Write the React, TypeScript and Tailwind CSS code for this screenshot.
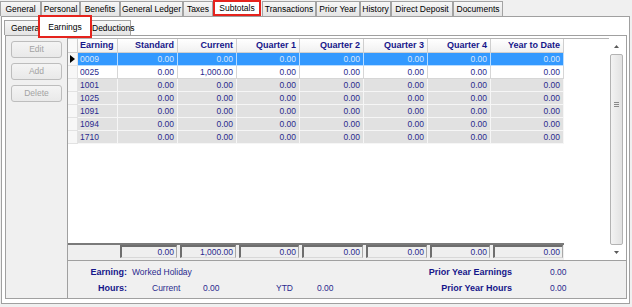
import React from "react";

const topTabs = [
  { label: "General", w: "w-[41px]" },
  { label: "Personal", w: "w-[39px]" },
  { label: "Benefits", w: "w-[40px]" },
  { label: "General Ledger", w: "w-[63px]" },
  { label: "Taxes", w: "w-[30px]" },
  { label: "Subtotals", w: "w-[48px]", active: true },
  { label: "Transactions", w: "w-[54px]" },
  { label: "Prior Year", w: "w-[44px]" },
  { label: "History", w: "w-[31px]" },
  { label: "Direct Deposit", w: "w-[62px]" },
  { label: "Documents", w: "w-[50px]" },
];

const cols = [
  { label: "Earning", w: "w-[40px]", box: "" },
  { label: "Standard", w: "w-[60px]", box: "w-[57px]" },
  { label: "Current", w: "w-[59px]", box: "w-[56px]" },
  { label: "Quarter 1", w: "w-[63px]", box: "w-[60px]" },
  { label: "Quarter 2", w: "w-[64px]", box: "w-[61px]" },
  { label: "Quarter 3", w: "w-[64px]", box: "w-[61px]" },
  { label: "Quarter 4", w: "w-[63px]", box: "w-[60px]" },
  { label: "Year to Date", w: "w-[73px]", box: "w-[70px]" },
];

const z = "0.00";
const rows = [
  ["0009", z, z, z, z, z, z, z],
  ["0025", z, "1,000.00", z, z, z, z, z],
  ["1001", z, z, z, z, z, z, z],
  ["1025", z, z, z, z, z, z, z],
  ["1091", z, z, z, z, z, z, z],
  ["1094", z, z, z, z, z, z, z],
  ["1710", z, z, z, z, z, z, z],
];

const totals = ["", z, "1,000.00", z, z, z, z, z];

// row look: 0 = selected, 1 = editable (white), rest = read only (grey)
const rowStyle = (i: number) => {
  if (i === 0) return { bg: "bg-[#3399ff]", line: "border-[#b9dcff]", text: "text-[#dce6fb]" };
  if (i === 1) return { bg: "bg-white", line: "border-[#d6d6d6]", text: "text-[#2a2a8e]" };
  return { bg: "bg-[#e1e1e1]", line: "border-[#f6f6f6]", text: "text-[#2a2a8e]" };
};

function SideButton({ label }: { label: string }) {
  return (
    <div className="w-[51px] h-[17px] flex items-center justify-center rounded-[3px] border border-[#bdbdbd] bg-linear-to-b from-[#f4f4f4] to-[#e9e9e9] text-[#a3a3a3]">
      {label}
    </div>
  );
}

export default function App() {
  return (
    <div className="w-[632px] h-[307px] overflow-hidden bg-[#f0f0f0] font-['Liberation_Sans',Arial,sans-serif] text-[8.5px] leading-none text-black">
      {/* Top tabs */}
      <div className="flex items-end h-[16px]">
        {topTabs.map((t) =>
          t.active ? (
            <div
              key={t.label}
              className={`${t.w} h-[16px] mr-[1px] flex items-center justify-center border-2 border-[#e5231d] bg-white`}
            >
              {t.label}
            </div>
          ) : (
            <div
              key={t.label}
              className={`${t.w} h-[15px] flex items-center justify-center border border-b-0 border-[#a3a3a3] bg-linear-to-b from-[#f7f7f7] to-[#e4e4e4]`}
            >
              {t.label}
            </div>
          )
        )}
      </div>

      {/* Outer tab page */}
      <div className="ml-[1px] w-[629px] h-[288px] border border-[#a0a0a0] bg-white">
        {/* Sub tabs */}
        <div className="flex items-end h-[18px] pl-[2px]">
          <div className="w-[36px] h-[15px] flex items-center pl-[6px] overflow-hidden whitespace-nowrap border border-b-0 border-[#a3a3a3] bg-linear-to-b from-[#f7f7f7] to-[#e4e4e4]">
            General
          </div>
          <div className="relative z-10 -ml-[2px] -mb-[3px] w-[54px] h-[23px] flex items-center justify-center pt-[2px] border-2 border-[#e5231d] bg-white">
            Earnings
          </div>
          <div className="-ml-[4px] w-[43px] h-[15px] flex items-center pl-[3px] whitespace-nowrap border border-b-0 border-[#a3a3a3] bg-linear-to-b from-[#f7f7f7] to-[#e4e4e4]">
            Deductions
          </div>
        </div>

        {/* Inner tab page */}
        <div className="ml-[3px] w-[622px] h-[264px] border border-[#a0a0a0] flex">
          {/* Buttons */}
          <div className="w-[62px] h-full border-r border-[#a0a0a0] bg-[#f0f0f0] pl-[5px] pt-[5px] flex flex-col gap-[5px]">
            <SideButton label="Edit" />
            <SideButton label="Add" />
            <SideButton label="Delete" />
          </div>

          {/* Grid + info */}
          <div className="flex-1 flex flex-col">
            <div className="h-[225px] flex border-b border-[#a0a0a0] bg-white">
              <div className="flex-1 mt-[2px] border-t border-[#b4b4b4] flex flex-col">
                {/* Header */}
                <div className="flex h-[14px]">
                  <div className="w-[10px] h-full border-r border-b border-[#cfcfcf] bg-[#fafafa]" />
                  {cols.map((c, i) => (
                    <div
                      key={c.label}
                      className={`${c.w} h-full flex items-center border-r border-b border-[#cfcfcf] bg-linear-to-b from-white to-[#f1f1f1] text-[9px] font-bold text-[#16168a] ${
                        i === 0 ? "pl-[2px]" : "justify-end pr-[3px]"
                      }`}
                    >
                      {c.label}
                    </div>
                  ))}
                </div>

                {/* Rows */}
                {rows.map((r, ri) => {
                  const s = rowStyle(ri);
                  return (
                    <div key={r[0]} className="flex h-[13px]">
                      <div className="w-[10px] h-full flex items-center justify-center border-r border-b border-[#e2e2e2] bg-[#f7f7f7]">
                        {ri === 0 && (
                          <svg width="5" height="8" viewBox="0 0 5 8">
                            <path d="M0 0 L5 4 L0 8 Z" fill="#000" />
                          </svg>
                        )}
                      </div>
                      {cols.map((c, ci) => (
                        <div
                          key={c.label}
                          className={`${c.w} h-full flex items-center border-r border-b ${s.line} ${s.bg} ${s.text} ${
                            ci === 0 ? "pl-[2px]" : "justify-end pr-[3px]"
                          }`}
                        >
                          {r[ci]}
                        </div>
                      ))}
                    </div>
                  );
                })}

                <div className="flex-1" />

                {/* Totals */}
                <div className="flex h-[17px] w-[496px] border-t-2 border-[#7a7a7a] bg-[#efefef]">
                  <div className="w-[10px]" />
                  {cols.map((c, ci) => (
                    <div key={c.label} className={`${c.w} h-full`}>
                      {ci > 0 && (
                        <div
                          className={`${c.box} ml-[2px] h-[13px] flex items-center justify-end pr-[2px] border-t-2 border-l-2 border-r border-b border-t-[#6e6e6e] border-l-[#6e6e6e] border-r-[#a8a8a8] border-b-[#d8d8d8] text-[#2a2a8e]`}
                        >
                          {totals[ci]}
                        </div>
                      )}
                    </div>
                  ))}
                </div>
              </div>

              {/* Scrollbar */}
              <div className="w-[17px] pt-[3px] pb-[1px] pr-[2px] flex flex-col">
                <div className="h-[15px] flex items-center justify-center">
                  <svg width="5" height="3" viewBox="0 0 5 3">
                    <path d="M0 3 L2.5 0 L5 3 Z" fill="#5a5a5a" />
                  </svg>
                </div>
                <div className="flex-1 mx-[1px] rounded-[2px] border border-[#b3b3b3] bg-linear-to-r from-[#f3f3f3] to-[#e2e2e2] flex flex-col items-center pt-[47px]">
                  <div className="w-[5px] flex flex-col gap-[1px]">
                    <div className="h-[1px] bg-[#8a8a8a]" />
                    <div className="h-[1px] bg-[#8a8a8a]" />
                    <div className="h-[1px] bg-[#8a8a8a]" />
                  </div>
                </div>
                <div className="h-[14px] flex items-center justify-center">
                  <svg width="5" height="3" viewBox="0 0 5 3">
                    <path d="M0 0 L2.5 3 L5 0 Z" fill="#5a5a5a" />
                  </svg>
                </div>
              </div>
            </div>

            {/* Earning info */}
            <div className="flex-1 bg-[#f0f0f0] pt-[3px] text-[#2a2a8e]">
              <div className="flex h-[16px] items-center">
                <span className="w-[59px] text-right text-[9px] font-bold text-[#16168a]">Earning:</span>
                <span className="ml-[5px] w-[268px]">Worked Holiday</span>
                <span className="w-[112px] text-right text-[9px] font-bold text-[#16168a]">Prior Year Earnings</span>
                <span className="ml-[38px]">0.00</span>
              </div>
              <div className="flex h-[16px] items-center">
                <span className="w-[59px] text-right text-[9px] font-bold text-[#16168a]">Hours:</span>
                <span className="ml-[25px] w-[51px]">Current</span>
                <span className="w-[73px]">0.00</span>
                <span className="w-[41px]">YTD</span>
                <span className="w-[83px]">0.00</span>
                <span className="w-[112px] text-right text-[9px] font-bold text-[#16168a]">Prior Year Hours</span>
                <span className="ml-[38px]">0.00</span>
              </div>
            </div>
          </div>
        </div>
      </div>
    </div>
  );
}
